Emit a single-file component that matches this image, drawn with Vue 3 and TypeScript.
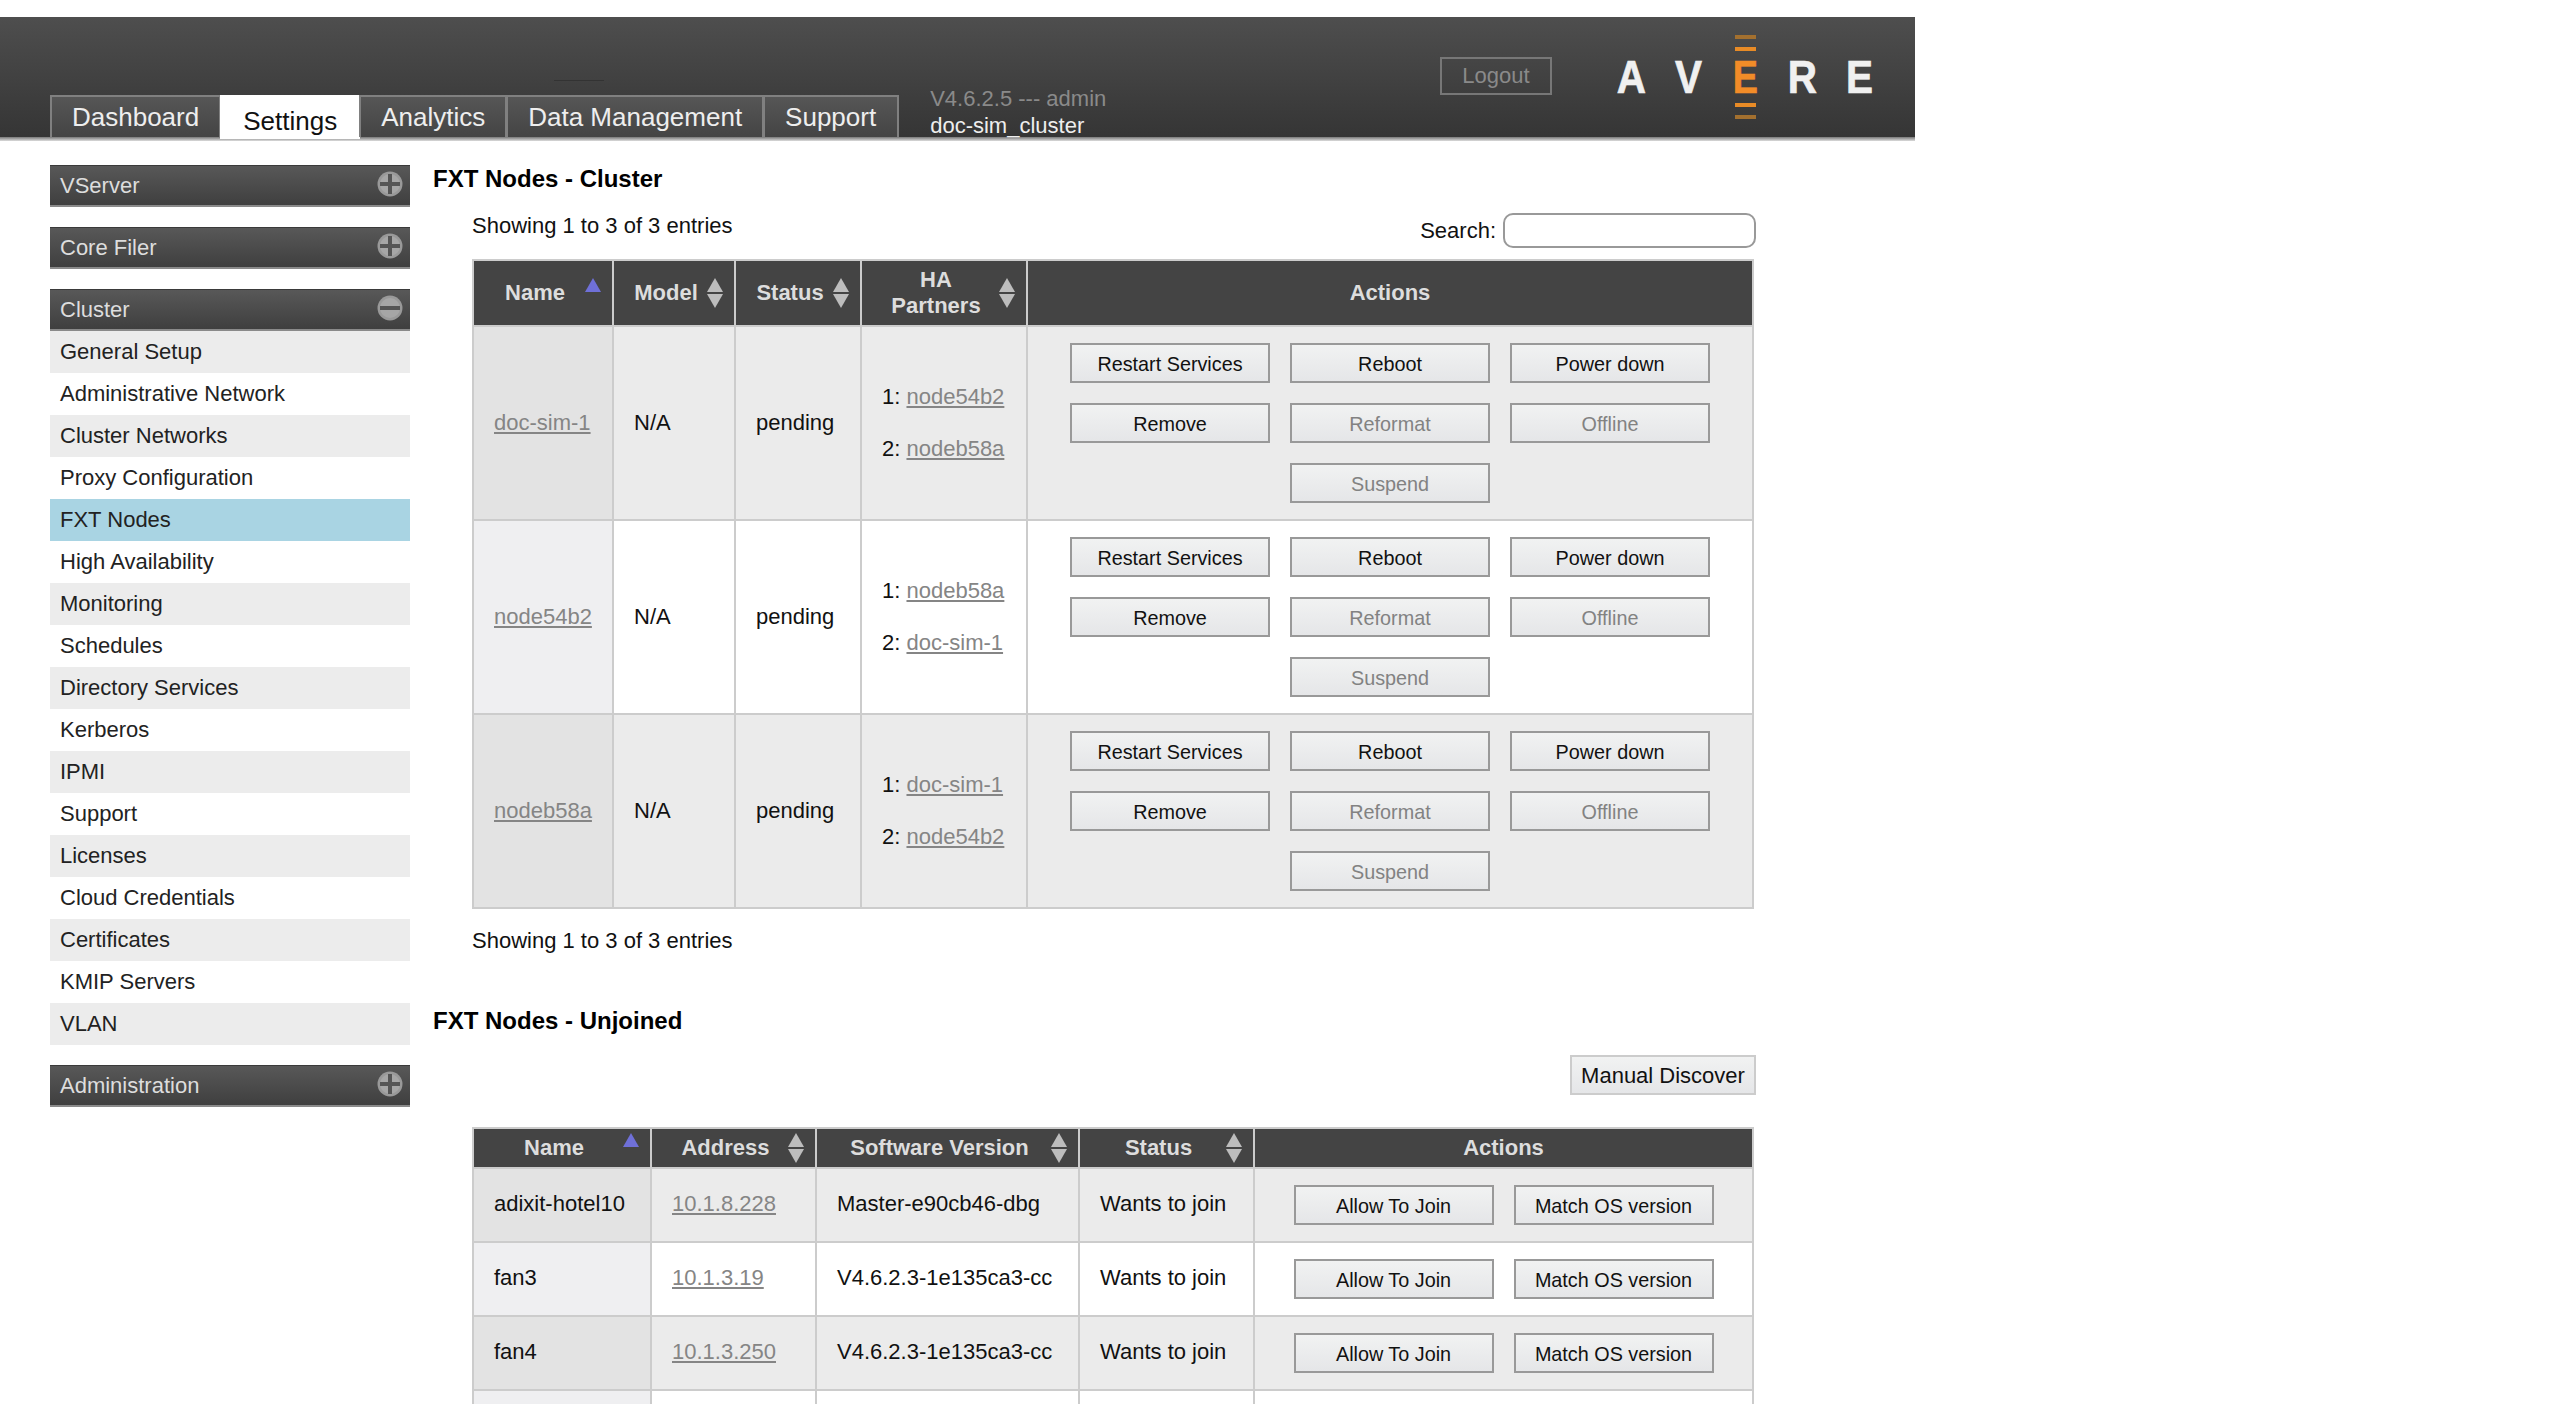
<template>
  <div class="page">
    <header class="top-bar">
      <nav class="tabs">
        <a v-for="tab in tabs" :key="tab" class="tab" :class="{ active: tab === 'Settings' }">{{ tab }}</a>
      </nav>
      <div class="version">
        <div class="version-line">V4.6.2.5 --- admin</div>
        <div class="cluster-name">doc-sim_cluster</div>
      </div>
      <span class="top-rule"></span>
      <button class="logout">Logout</button>
      <div class="logo">
        <span class="logo-letter">A</span>
        <span class="logo-letter">V</span>
        <span class="logo-letter logo-mid">
          <i class="dash faded"></i>
          <i class="dash"></i>
          <b>E</b>
          <i class="dash"></i>
          <i class="dash faded"></i>
        </span>
        <span class="logo-letter">R</span>
        <span class="logo-letter">E</span>
      </div>
    </header>

    <div class="main">
      <aside class="sidebar">
        <section v-for="group in groups" :key="group.title" class="group">
          <div class="group-head">
            <span>{{ group.title }}</span>
            <svg class="toggle" width="26" height="26" viewBox="0 0 26 26">
              <circle cx="13" cy="13" r="12.5" fill="#999" />
              <circle cx="13" cy="13" r="10" fill="#a6a6a6" />
              <rect x="3" y="11" width="20" height="4" fill="#555" />
              <rect v-if="!group.items.length" x="11" y="3" width="4" height="20" fill="#555" />
            </svg>
          </div>
          <ul v-if="group.items.length" class="group-items">
            <li v-for="item in group.items" :key="item" :class="{ selected: item === 'FXT Nodes' }">{{ item }}</li>
          </ul>
        </section>
      </aside>

      <main class="content">
        <h2 class="title">FXT Nodes - Cluster</h2>
        <div class="panel">
          <div class="toolbar">
            <div class="info">Showing 1 to 3 of 3 entries</div>
            <label class="search">Search: <input type="text" /></label>
          </div>
          <table class="grid cluster">
            <thead>
              <tr>
                <th v-for="(col, i) in clusterCols" :key="col">
                  <span v-html="col"></span>
                  <template v-if="i < 4">
                    <svg class="sort" width="18" height="30" viewBox="0 0 18 30">
                      <polygon v-if="i === 0" points="9,0 17,14 1,14" fill="#6f70d8" />
                      <template v-else>
                        <polygon points="9,0 17,14 1,14" fill="#bdbdbd" />
                        <polygon points="1,16 17,16 9,30" fill="#bdbdbd" />
                      </template>
                    </svg>
                  </template>
                </th>
              </tr>
            </thead>
            <tbody>
              <tr v-for="node in clusterNodes" :key="node.name">
                <td class="sorted"><a>{{ node.name }}</a></td>
                <td>N/A</td>
                <td>pending</td>
                <td>
                  <p class="partner">1: <a>{{ node.partners[0] }}</a></p>
                  <p class="partner">2: <a>{{ node.partners[1] }}</a></p>
                </td>
                <td class="actions">
                  <div class="buttons three">
                    <button
                      v-for="act in clusterActions"
                      :key="act.label"
                      class="btn"
                      :class="{ off: act.off, mid: act.label === 'Suspend' }"
                    >{{ act.label }}</button>
                  </div>
                </td>
              </tr>
            </tbody>
          </table>
          <div class="info after">Showing 1 to 3 of 3 entries</div>
        </div>

        <h2 class="title second">FXT Nodes - Unjoined</h2>
        <div class="panel">
          <div class="discover-row">
            <button class="discover">Manual Discover</button>
          </div>
          <table class="grid unjoined">
            <thead>
              <tr>
                <th v-for="(col, i) in unjoinedCols" :key="col">
                  <span>{{ col }}</span>
                  <svg v-if="i < 4" class="sort" width="18" height="30" viewBox="0 0 18 30">
                    <polygon v-if="i === 0" points="9,0 17,14 1,14" fill="#6f70d8" />
                    <template v-else>
                      <polygon points="9,0 17,14 1,14" fill="#bdbdbd" />
                      <polygon points="1,16 17,16 9,30" fill="#bdbdbd" />
                    </template>
                  </svg>
                </th>
              </tr>
            </thead>
            <tbody>
              <tr v-for="row in unjoined" :key="row.name">
                <td class="sorted lift">{{ row.name }}</td>
                <td class="lift"><a>{{ row.address }}</a></td>
                <td class="lift">{{ row.version }}</td>
                <td class="lift">Wants to join</td>
                <td class="actions">
                  <div class="buttons two">
                    <button class="btn">Allow To Join</button>
                    <button class="btn">Match OS version</button>
                  </div>
                </td>
              </tr>
              <tr>
                <td class="sorted"></td>
                <td></td>
                <td></td>
                <td></td>
                <td class="actions"><div class="buttons two"><span class="spacer"></span></div></td>
              </tr>
            </tbody>
          </table>
        </div>
      </main>
    </div>
  </div>
</template>

<script setup lang="ts">
interface Group {
  title: string
  items: string[]
}

interface ClusterNode {
  name: string
  partners: [string, string]
}

const tabs = ['Dashboard', 'Settings', 'Analytics', 'Data Management', 'Support']

const groups: Group[] = [
  { title: 'VServer', items: [] },
  { title: 'Core Filer', items: [] },
  {
    title: 'Cluster',
    items: [
      'General Setup',
      'Administrative Network',
      'Cluster Networks',
      'Proxy Configuration',
      'FXT Nodes',
      'High Availability',
      'Monitoring',
      'Schedules',
      'Directory Services',
      'Kerberos',
      'IPMI',
      'Support',
      'Licenses',
      'Cloud Credentials',
      'Certificates',
      'KMIP Servers',
      'VLAN',
    ],
  },
  { title: 'Administration', items: [] },
]

const clusterCols = ['Name', 'Model', 'Status', 'HA<br>Partners', 'Actions']
const unjoinedCols = ['Name', 'Address', 'Software Version', 'Status', 'Actions']

const clusterNodes: ClusterNode[] = [
  { name: 'doc-sim-1', partners: ['node54b2', 'nodeb58a'] },
  { name: 'node54b2', partners: ['nodeb58a', 'doc-sim-1'] },
  { name: 'nodeb58a', partners: ['doc-sim-1', 'node54b2'] },
]

const clusterActions = [
  { label: 'Restart Services', off: false },
  { label: 'Reboot', off: false },
  { label: 'Power down', off: false },
  { label: 'Remove', off: false },
  { label: 'Reformat', off: true },
  { label: 'Offline', off: true },
  { label: 'Suspend', off: true },
]

const unjoined = [
  { name: 'adixit-hotel10', address: '10.1.8.228', version: 'Master-e90cb46-dbg' },
  { name: 'fan3', address: '10.1.3.19', version: 'V4.6.2.3-1e135ca3-cc' },
  { name: 'fan4', address: '10.1.3.250', version: 'V4.6.2.3-1e135ca3-cc' },
]
</script>

<style>
html,
body {
  overflow: hidden;
  background: #fff;
}
</style>

<style scoped>
.page {
  height: 1404px;
  overflow: hidden;
  padding-top: 17px;
  box-sizing: border-box;
  font-family: 'Liberation Sans', Arial, sans-serif;
  font-size: 22px;
  color: #111;
}

/* top bar */
.top-bar {
  position: relative;
  display: flex;
  width: 1915px;
  height: 124px;
  box-sizing: border-box;
  padding-bottom: 4px;
  background: linear-gradient(#4e4e4e 0, #353535 120px, #787878 120px, #dcdcdc 124px);
}

.tabs {
  display: flex;
  align-self: flex-end;
  margin-left: 51px;
  height: 42px;
}

.tab {
  box-sizing: border-box;
  padding: 4px 20px 0;
  border: 2px solid #808080;
  border-bottom: 0;
  margin-left: -1px;
  font-size: 26px;
  line-height: 32px;
  color: #eee;
  background: linear-gradient(#565656, #444);
}

.tab.active {
  height: 44px;
  padding: 8px 21px 0;
  background: #fff;
  color: #111;
  border-color: #fff;
}

.tab:last-child {
  padding-right: 21px;
}

.version {
  align-self: flex-end;
  margin-left: 31px;
  line-height: 27px;
  margin-bottom: -2px;
}

.version-line {
  color: #8a8a8a;
}

.cluster-name {
  color: #eee;
}

.top-rule {
  position: absolute;
  left: 554px;
  top: 63px;
  width: 50px;
  height: 1px;
  background: #333;
}

.logout {
  align-self: flex-start;
  margin: 40px 0 0 auto;
  width: 112px;
  height: 38px;
  padding: 0;
  border: 2px solid #777;
  background: transparent;
  font: inherit;
  color: #8a8a8a;
}

.logo {
  display: flex;
  align-items: center;
  margin: 0 27px 0 51px;
  height: 120px;
}

.logo-letter {
  width: 57px;
  text-align: center;
  font-size: 46px;
  font-weight: 700;
  line-height: 34px;
  color: #f0f0f0;
  transform: scaleX(0.88);
  -webkit-text-stroke: 0.7px #f0f0f0;
}

.logo-mid {
  display: flex;
  flex-direction: column;
  align-items: center;
  color: #f28c28;
  transform: none;
  -webkit-text-stroke: 0;
}

.logo-mid b {
  transform: scaleX(0.82);
  margin: 5px 0 5px;
  -webkit-text-stroke: 0.7px #f28c28;
}

.dash {
  display: block;
  width: 21px;
  height: 4px;
  margin: 4px 0;
  background: #e88b26;
}

.dash.faded {
  background: #a3702f;
}

/* layout */
.main {
  display: flex;
  align-items: flex-start;
  margin-top: 24px;
}

.sidebar {
  display: flex;
  flex-direction: column;
  gap: 20px;
  width: 360px;
  margin-left: 50px;
  flex: none;
}

.group-head {
  display: flex;
  justify-content: space-between;
  align-items: center;
  box-sizing: border-box;
  height: 42px;
  padding: 0 7px 0 10px;
  border-top: 1px solid #3a3a3a;
  border-bottom: 2px solid #8a8a8a;
  background: linear-gradient(#585858, #3f3f3f);
  color: #ddd;
}

.toggle {
  flex: none;
  margin-bottom: 3px;
}

.group-items {
  list-style: none;
  margin: 0;
  padding: 0;
}

.group-items li {
  height: 42px;
  line-height: 42px;
  padding-left: 10px;
  color: #222;
}

.group-items li:nth-child(odd) {
  background: #ececec;
}

.group-items li.selected {
  background: #a9d4e3;
}

.content {
  margin-left: 23px;
  margin-top: -1px;
  width: 1323px;
  flex: none;
}

.title {
  margin: 0 0 20px;
  padding-top: 1px;
  font-size: 24px;
  line-height: 28px;
  font-weight: 700;
  color: #000;
}

.title.second {
  margin: 52px 0 20px;
}

.panel {
  margin-left: 39px;
  width: 1284px;
}

.toolbar {
  display: flex;
  justify-content: space-between;
  padding-bottom: 11px;
}

.info {
  line-height: 26px;
}

.info.after {
  margin-top: 18px;
  padding-top: 1px;
}

.search {
  display: flex;
  align-items: center;
  gap: 7px;
}

.search input {
  box-sizing: border-box;
  width: 253px;
  height: 35px;
  border: 2px solid #999;
  border-radius: 10px;
  background: #fff;
  outline: none;
}

/* tables */
.grid {
  table-layout: fixed;
  width: 1282px;
  border-collapse: separate;
  border-spacing: 0;
  border: 2px solid #ccc;
  border-bottom: 0;
}

.grid th {
  position: relative;
  box-sizing: border-box;
  padding: 6px 36px 6px 20px;
  border-right: 2px solid #ccc;
  border-bottom: 2px solid #ccc;
  background: #444;
  color: #ddd;
  font-weight: 700;
  line-height: 26px;
  text-align: center;
}

.grid th:last-child {
  padding-right: 20px;
  border-right: 0;
}

.sort {
  position: absolute;
  right: 10px;
  top: 50%;
  margin-top: -15px;
}

.grid td {
  box-sizing: border-box;
  padding: 0 20px;
  border-right: 2px solid #ccc;
  border-bottom: 2px solid #ccc;
  vertical-align: middle;
  color: #111;
}

.grid td:last-child {
  border-right: 0;
}

.grid tbody tr:nth-child(odd) td {
  background: #ebebeb;
}

.grid tbody tr:nth-child(odd) td.sorted {
  background: #e3e3e3;
}

.grid tbody tr:nth-child(even) td.sorted {
  background: #efeff1;
}

.grid a {
  color: #858585;
  text-decoration: underline;
}

.grid td.lift {
  padding-bottom: 2px;
}

.partner {
  margin: 0;
  line-height: 26px;
}

.partner + .partner {
  margin-top: 26px;
}

.grid td.actions {
  padding: 16px 0;
}

.buttons {
  display: grid;
  grid-auto-rows: 40px;
  gap: 20px;
  justify-content: center;
}

.buttons.three {
  grid-template-columns: repeat(3, 200px);
}

.buttons.two {
  grid-template-columns: repeat(2, 200px);
}

.spacer {
  height: 40px;
}

.btn {
  padding: 2px 0 0;
  border: 2px solid #999;
  background: linear-gradient(#f1f2f2, #e5e6e8);
  font-family: inherit;
  font-size: 19.8px;
  color: #111;
}

.btn.off {
  color: #828282;
}

.btn.mid {
  grid-column: 2;
}

.discover-row {
  display: flex;
  justify-content: flex-end;
  margin-bottom: 32px;
}

.discover {
  width: 186px;
  height: 40px;
  padding: 1px 0 0;
  border: 2px solid #ccc;
  background: linear-gradient(#f1f2f2, #e5e6e8);
  font: inherit;
  color: #111;
}

.cluster th:nth-child(1) { width: 140px; }
.cluster th:nth-child(2) { width: 122px; }
.cluster th:nth-child(3) { width: 126px; }
.cluster th:nth-child(4) { width: 166px; }
.cluster th:nth-child(5) { width: 724px; }

.unjoined th:nth-child(1) { width: 178px; }
.unjoined th:nth-child(2) { width: 165px; }
.unjoined th:nth-child(3) { width: 263px; }
.unjoined th:nth-child(4) { width: 175px; }
.unjoined th:nth-child(5) { width: 497px; }
</style>
